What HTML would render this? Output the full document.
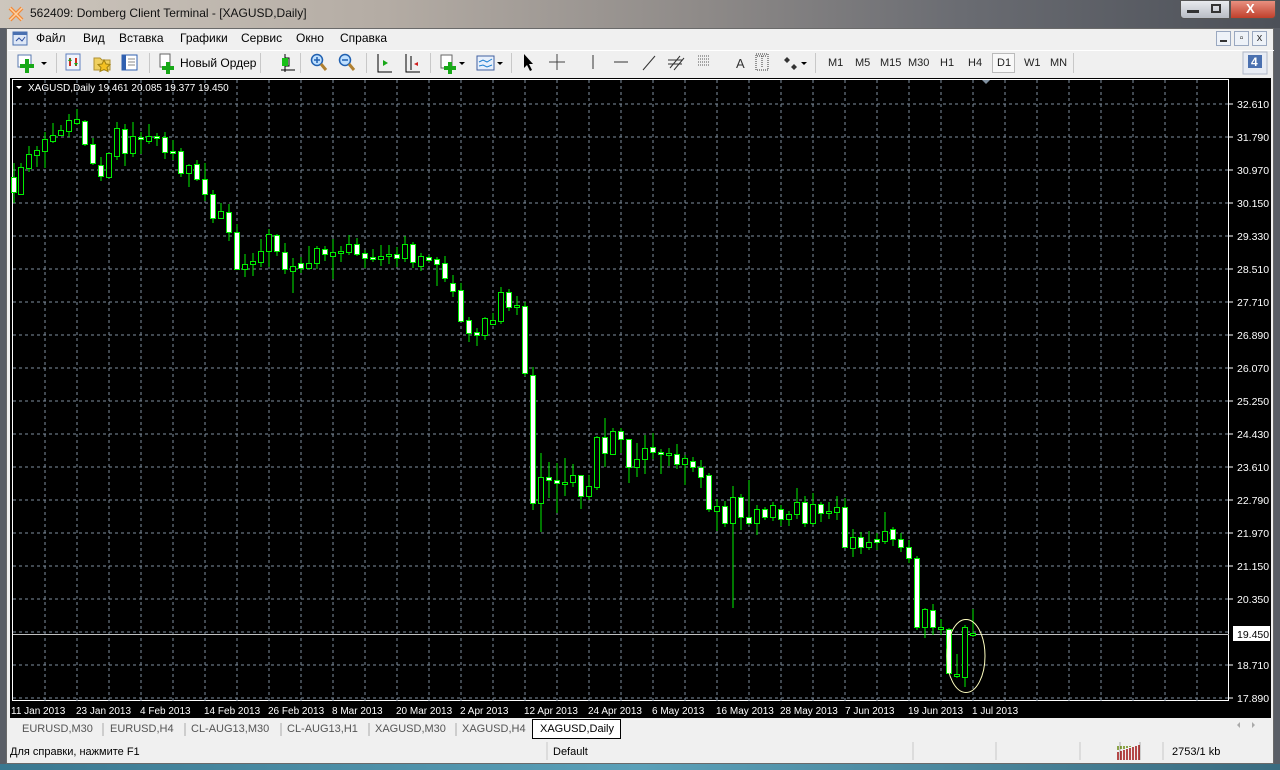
<!DOCTYPE html>
<html><head><meta charset="utf-8">
<style>
*{margin:0;padding:0;box-sizing:border-box}
body{width:1280px;height:770px;overflow:hidden;background:#5a5e66;font-family:"Liberation Sans","DejaVu Sans",sans-serif;position:relative}
.abs{position:absolute}
#title{left:0;top:0;width:1280px;height:28px;background:linear-gradient(90deg,#cdc6bd 0%,#b4aca4 30%,#8e8a88 55%,#6a6c72 75%,#4c5058 100%)}
#title span{position:absolute;left:30px;top:6px;font-size:12px;color:#111}
#frame{left:6px;top:28px;width:1268px;height:736px;background:#f0f0f0;border:1px solid #6a6a6a}
.menu{font-size:12px;color:#000;top:31px}
.tb{font-size:11px;color:#222;top:57px}
.sep{width:1px;height:20px;background:#c8c8c8;top:53px}
#chart{left:10px;top:78px;width:1261px;height:640px;background:#000}
.tab{top:723px;font-size:11px;color:#555}
.st{top:746px;font-size:11px;color:#000}
</style></head><body>
<div id="title" class="abs">
 <svg class="abs" style="left:8px;top:6px" width="16" height="16"><path d="M2 2L14 14M14 2L2 14" stroke="#f08a3a" stroke-width="4"/><path d="M2 2L14 14M14 2L2 14" stroke="#ffd0a0" stroke-width="1.5"/></svg>
 <span>562409: Domberg Client Terminal - [XAGUSD,Daily]</span>
 <div class="abs" style="left:1180px;top:0;width:50px;height:19px;background:linear-gradient(#e8eaee,#b8bcc4);border:1px solid #555;border-radius:0 0 0 4px"></div>
 <div class="abs" style="left:1187px;top:10px;width:12px;height:3px;background:#333"></div>
 <div class="abs" style="left:1211px;top:4px;width:10px;height:9px;border:2px solid #333"></div>
 <div class="abs" style="left:1230px;top:0;width:46px;height:19px;background:linear-gradient(#e89080,#c0402c);border:1px solid #555;border-radius:0 0 4px 0"></div>
 <div class="abs" style="left:1246px;top:1px;color:#fff;font-size:13px;font-weight:bold">X</div>
</div>
<div id="frame" class="abs"></div>
<!-- menu -->
<svg class="abs" style="left:12px;top:30px" width="18" height="18"><rect x="1" y="2" width="14" height="13" fill="#dfe8f6" stroke="#4a70b0"/><rect x="1" y="2" width="14" height="3" fill="#4a70b0"/><path d="M4 11l3-3 3 3 3-4" stroke="#3050a0" fill="none"/></svg>
<div class="abs menu" style="left:36px">Файл</div>
<div class="abs menu" style="left:83px">Вид</div>
<div class="abs menu" style="left:119px">Вставка</div>
<div class="abs menu" style="left:180px">Графики</div>
<div class="abs menu" style="left:241px">Сервис</div>
<div class="abs menu" style="left:296px">Окно</div>
<div class="abs menu" style="left:340px">Справка</div>
<div class="abs" style="left:1216px;top:31px;width:15px;height:15px;border:1px solid #9aa8c0;background:#eef2f8"></div>
<div class="abs" style="left:1220px;top:40px;width:7px;height:2px;background:#333"></div>
<div class="abs" style="left:1234px;top:31px;width:15px;height:15px;border:1px solid #9aa8c0;background:#eef2f8;font-size:10px;text-align:center;line-height:13px">▫</div>
<div class="abs" style="left:1252px;top:31px;width:15px;height:15px;border:1px solid #9aa8c0;background:#eef2f8;font-size:11px;text-align:center;line-height:13px;color:#333">x</div>
<!-- toolbar -->
<div class="abs" style="left:8px;top:50px;width:1266px;height:1px;background:#fff"></div>
<svg class="abs" style="left:0;top:50px" width="1280" height="28">
 <g fill="none">
 <rect x="18" y="5" width="13" height="12" fill="#fff" stroke="#5a7ab0"/><path d="M27 9v14M20 16h14" stroke="#18a818" stroke-width="4"/><path d="M41 12l3 3 3-3z" fill="#000"/>
 <rect x="66" y="4" width="14" height="16" fill="#f0f4fc" stroke="#6080c0"/><path d="M70 8v8M76 16v-8" stroke="#d03020" stroke-width="2"/><path d="M70 8l-2 3h4z M76 16l-2-3h4z" fill="#20a020"/>
 <path d="M94 8h6l2 2h8v10h-16z" fill="#f0d060" stroke="#b09030"/><path d="M104 10l2 4 4 .5-3 3 1 4-4-2-4 2 1-4-3-3 4-.5z" fill="#f4c020" stroke="#a08010"/>
 <rect x="122" y="5" width="15" height="15" fill="#fff" stroke="#3060b0"/><path d="M122 5h4v15h-4z" fill="#3060b0"/><path d="M128 9h7M128 12h7M128 15h7" stroke="#888"/>
 <rect x="160" y="4" width="10" height="13" fill="#fff" stroke="#666"/><path d="M168 12v12M162 18h12" stroke="#18a818" stroke-width="4"/>
 <path d="M285 4v18M281 20h14M285 8h4v8h-4" stroke="#000"/><rect x="282" y="8" width="6" height="8" fill="#18c018"/>
 <circle cx="317" cy="10" r="5.5" fill="#bfe0ff" stroke="#2060b0" stroke-width="1.5"/><path d="M321 14l5 6" stroke="#b08030" stroke-width="3"/><path d="M314 10h6M317 7v6" stroke="#2060b0" stroke-width="1.5"/>
 <circle cx="345" cy="10" r="5.5" fill="#bfe0ff" stroke="#2060b0" stroke-width="1.5"/><path d="M349 14l5 6" stroke="#b08030" stroke-width="3"/><path d="M342 10h6" stroke="#2060b0" stroke-width="1.5"/>
 <path d="M378 4v18h14" stroke="#000"/><path d="M383 10l5 3-5 3z" fill="#18a818"/>
 <path d="M406 4v18h14M411 6v14" stroke="#000"/><path d="M418 12l-4 2 4 2z" fill="#d02020"/>
 <rect x="441" y="5" width="11" height="13" fill="#fff" stroke="#666"/><path d="M450 12v12M444 18h12" stroke="#18a818" stroke-width="4"/><path d="M459 12l3 3 3-3z" fill="#000"/>
 <rect x="477" y="6" width="17" height="14" fill="#e8f0fc" stroke="#4060a0"/><path d="M479 12l4-2 4 2 5-3M479 16l4-1 4 2 5-2" stroke="#2080d0"/><path d="M497 12l3 3 3-3z" fill="#000"/>
 <path d="M524 4v14l3-3 3 6 2-1-3-6h4z" fill="#000"/>
 <path d="M557 4v16M549 12h16" stroke="#444"/>
 <path d="M593 5v14" stroke="#333"/><path d="M614 12h14" stroke="#333"/><path d="M643 20l12-14" stroke="#333"/>
 <path d="M670 18l10-12M674 20l10-12M668 10h14M668 14h14" stroke="#333"/>
 <path d="M698 6h12M698 9h12M698 12h12M698 15h12" stroke="#555" stroke-dasharray="1 1"/>
 <path d="M757 6h10M762 6v12M756 4h12v16h-12z" stroke="#333" stroke-dasharray="1 1"/>
 <path d="M787 7l-3 3 3 3 3-3z M794 14l-3 3 3 3 3-3z" fill="#333"/><path d="M801 12l3 3 3-3z" fill="#000"/>
 <rect x="1243" y="2" width="24" height="22" fill="#e8ecf4" stroke="#b0b8c8"/><rect x="1248" y="5" width="14" height="13" fill="#4a70b0"/>
 </g>
 <text x="736" y="18" font-size="13" fill="#333" font-family="Liberation Sans">A</text>
 <text x="1251" y="16" font-size="12" fill="#fff" font-family="Liberation Sans" font-weight="bold">4</text>
</svg>
<div class="abs" style="left:992px;top:53px;width:23px;height:20px;border:1px solid #bbb;background:#f8f8f8"></div>
<div class="abs tb" style="left:180px;font-size:12px;color:#000;top:56px">Новый Ордер</div>
<div class="abs tb" style="left:828px">M1</div>
<div class="abs tb" style="left:855px">M5</div>
<div class="abs tb" style="left:880px">M15</div>
<div class="abs tb" style="left:908px">M30</div>
<div class="abs tb" style="left:940px">H1</div>
<div class="abs tb" style="left:968px">H4</div>
<div class="abs tb" style="left:997px">D1</div>
<div class="abs tb" style="left:1024px">W1</div>
<div class="abs tb" style="left:1050px">MN</div>
<div class="abs sep" style="left:56px"></div><div class="abs sep" style="left:149px"></div><div class="abs sep" style="left:260px"></div><div class="abs sep" style="left:300px"></div><div class="abs sep" style="left:366px"></div><div class="abs sep" style="left:430px"></div><div class="abs sep" style="left:511px"></div><div class="abs sep" style="left:815px"></div><div class="abs sep" style="left:1073px"></div>
<!-- chart -->
<div id="chart" class="abs"></div>
<svg class="abs" style="left:0;top:0" width="1280" height="770">
 <rect x="12.5" y="79.5" width="1216" height="621" fill="none" stroke="#fff"/>
 <g stroke="#8090a0" stroke-dasharray="3 3">
  <path d="M13 104H1229M13 137H1229M13 170H1229M13 203H1229M13 236H1229M13 269H1229M13 302H1229M13 335H1229M13 368H1229M13 401H1229M13 434H1229M13 467H1229M13 500H1229M13 533H1229M13 566H1229M13 599H1229M13 632H1229M13 665H1229M13 698H1229"/>
  <path d="M45 80V704M77 80V704M109 80V704M141 80V704M173 80V704M205 80V704M237 80V704M269 80V704M301 80V704M333 80V704M365 80V704M397 80V704M429 80V704M461 80V704M493 80V704M525 80V704M557 80V704M589 80V704M621 80V704M653 80V704M685 80V704M717 80V704M749 80V704M781 80V704M813 80V704M845 80V704M877 80V704M909 80V704M941 80V704M973 80V704M1005 80V704M1037 80V704M1069 80V704M1101 80V704M1133 80V704M1165 80V704M1197 80V704"/>
 </g>
 <path d="M1229 104h4M1229 137h4M1229 170h4M1229 203h4M1229 236h4M1229 269h4M1229 302h4M1229 335h4M1229 368h4M1229 401h4M1229 434h4M1229 467h4M1229 500h4M1229 533h4M1229 566h4M1229 599h4M1229 665h4M1229 698h4" stroke="#fff"/>
 <path d="M13 634.5H1229" stroke="#c0c0c0"/>
 <path d="M982 80l4 4 4-4z" fill="#8090a0"/>
 <path d="M16 86l3 3 3-3z" fill="#fff"/>
 <g id="c" stroke="#00ee00" stroke-width="1" fill="#000"></g>
 <g stroke="#00ee00" stroke-width="1">
<path d="M14 163V203M21 163V195M29 146V172M37 146V167M45 132V168M53 123V143M61 125V136M69 114V137M77 109V125M85 120V146M93 138V165M101 157V181M109 153V177M117 122V160M125 124V166M133 122V157M141 132V154M149 124V144M157 133V146M165 132V159M173 140V160M181 148V177M189 164V187M197 160V181M205 163V201M213 190V223M221 203V218M229 204V241M237 224V269M245 254V277M253 253V276M261 239V267M269 229V267M277 234V256M285 243V274M293 258V293M301 257V273M309 246V268M317 246V269M325 246V261M333 239V279M341 246V262M349 235V255M357 238V256M365 250V268M373 249V262M381 245V266M389 245V264M397 247V267M405 236V262M413 242V268M421 253V271M429 255V262M437 257V286M445 256V282M453 275V297M461 283V321M469 317V342M477 328V346M485 317V340M493 313V324M501 287V324M509 289V311M517 296V315M525 302V376M533 367V510M541 453V532M549 462V498M557 463V513M565 458V496M573 464V487M581 475V509M589 475V500M597 436V490M605 418V467M613 428V454M621 428V453M629 439V483M637 443V477M645 435V474M653 433V459M661 449V474M669 448V466M677 444V469M685 455V485M693 457V472M701 460V488M709 473V512M717 499V531M725 501V527M733 486V608M741 494V530M749 480V525M757 505V535M765 507V520M773 502V521M781 505V526M789 511V526M797 488V519M805 496V527M813 493V525M821 502V522M829 502V519M837 496V520M845 498V547M853 529V557M861 532V554M869 531V550M877 533V550M885 512V544M893 527V546M901 533V552M909 540V563M917 556V630M925 608V638M933 604V635M941 619V635M949 628V673M957 654V678M965 625V687M973 609V637"/>
 </g>
 <g stroke="#00ee00" stroke-width="1" fill="#fff">
<rect x="11.5" y="177.5" width="5" height="15"/><rect x="82.5" y="121.5" width="5" height="23"/><rect x="90.5" y="144.5" width="5" height="19"/><rect x="98.5" y="165.5" width="5" height="11"/><rect x="122.5" y="129.5" width="5" height="24"/><rect x="138.5" y="137.5" width="5" height="2"/><rect x="154.5" y="136.5" width="5" height="2"/><rect x="162.5" y="137.5" width="5" height="15"/><rect x="170.5" y="151.5" width="5" height="2"/><rect x="178.5" y="151.5" width="5" height="22"/><rect x="194.5" y="164.5" width="5" height="15"/><rect x="202.5" y="179.5" width="5" height="15"/><rect x="210.5" y="194.5" width="5" height="24"/><rect x="226.5" y="212.5" width="5" height="20"/><rect x="234.5" y="232.5" width="5" height="37"/><rect x="274.5" y="235.5" width="5" height="16"/><rect x="282.5" y="252.5" width="5" height="17"/><rect x="298.5" y="263.5" width="5" height="5"/><rect x="322.5" y="249.5" width="5" height="5"/><rect x="354.5" y="244.5" width="5" height="10"/><rect x="362.5" y="253.5" width="5" height="5"/><rect x="370.5" y="257.5" width="5" height="2"/><rect x="394.5" y="254.5" width="5" height="4"/><rect x="410.5" y="244.5" width="5" height="18"/><rect x="426.5" y="257.5" width="5" height="3"/><rect x="434.5" y="259.5" width="5" height="5"/><rect x="442.5" y="263.5" width="5" height="15"/><rect x="450.5" y="283.5" width="5" height="8"/><rect x="458.5" y="290.5" width="5" height="31"/><rect x="466.5" y="320.5" width="5" height="13"/><rect x="474.5" y="332.5" width="5" height="3"/><rect x="506.5" y="292.5" width="5" height="15"/><rect x="522.5" y="306.5" width="5" height="67"/><rect x="530.5" y="375.5" width="5" height="128"/><rect x="546.5" y="477.5" width="5" height="3"/><rect x="554.5" y="480.5" width="5" height="3"/><rect x="578.5" y="475.5" width="5" height="21"/><rect x="602.5" y="437.5" width="5" height="16"/><rect x="618.5" y="431.5" width="5" height="8"/><rect x="626.5" y="439.5" width="5" height="28"/><rect x="650.5" y="447.5" width="5" height="5"/><rect x="658.5" y="452.5" width="5" height="2"/><rect x="674.5" y="454.5" width="5" height="10"/><rect x="690.5" y="461.5" width="5" height="6"/><rect x="698.5" y="467.5" width="5" height="10"/><rect x="706.5" y="475.5" width="5" height="34"/><rect x="722.5" y="506.5" width="5" height="17"/><rect x="738.5" y="497.5" width="5" height="20"/><rect x="746.5" y="517.5" width="5" height="6"/><rect x="762.5" y="509.5" width="5" height="8"/><rect x="778.5" y="509.5" width="5" height="10"/><rect x="802.5" y="502.5" width="5" height="21"/><rect x="818.5" y="504.5" width="5" height="9"/><rect x="842.5" y="507.5" width="5" height="40"/><rect x="858.5" y="537.5" width="5" height="10"/><rect x="874.5" y="539.5" width="5" height="3"/><rect x="890.5" y="529.5" width="5" height="10"/><rect x="898.5" y="539.5" width="5" height="8"/><rect x="906.5" y="547.5" width="5" height="11"/><rect x="914.5" y="558.5" width="5" height="69"/><rect x="930.5" y="610.5" width="5" height="17"/><rect x="946.5" y="629.5" width="5" height="44"/>
 </g>
 <g stroke="#00ee00" stroke-width="1" fill="#000">
<rect x="18.5" y="167.5" width="5" height="27"/><rect x="26.5" y="154.5" width="5" height="14"/><rect x="34.5" y="150.5" width="5" height="5"/><rect x="42.5" y="139.5" width="5" height="12"/><rect x="50.5" y="135.5" width="5" height="6"/><rect x="58.5" y="130.5" width="5" height="5"/><rect x="66.5" y="120.5" width="5" height="11"/><rect x="74.5" y="119.5" width="5" height="4"/><rect x="106.5" y="153.5" width="5" height="24"/><rect x="114.5" y="128.5" width="5" height="28"/><rect x="130.5" y="136.5" width="5" height="17"/><rect x="146.5" y="136.5" width="5" height="5"/><rect x="186.5" y="165.5" width="5" height="8"/><rect x="218.5" y="211.5" width="5" height="7"/><rect x="242.5" y="264.5" width="5" height="5"/><rect x="250.5" y="261.5" width="5" height="3"/><rect x="258.5" y="251.5" width="5" height="11"/><rect x="266.5" y="234.5" width="5" height="17"/><rect x="290.5" y="266.5" width="5" height="5"/><rect x="306.5" y="263.5" width="5" height="5"/><rect x="314.5" y="248.5" width="5" height="15"/><rect x="330.5" y="252.5" width="5" height="4"/><rect x="338.5" y="251.5" width="5" height="2"/><rect x="346.5" y="244.5" width="5" height="8"/><rect x="378.5" y="256.5" width="5" height="3"/><rect x="386.5" y="254.5" width="5" height="2"/><rect x="402.5" y="244.5" width="5" height="14"/><rect x="418.5" y="256.5" width="5" height="10"/><rect x="482.5" y="318.5" width="5" height="17"/><rect x="490.5" y="320.5" width="5" height="4"/><rect x="498.5" y="292.5" width="5" height="29"/><rect x="514.5" y="305.5" width="5" height="2"/><rect x="538.5" y="477.5" width="5" height="26"/><rect x="562.5" y="482.5" width="5" height="2"/><rect x="570.5" y="475.5" width="5" height="7"/><rect x="586.5" y="486.5" width="5" height="10"/><rect x="594.5" y="437.5" width="5" height="50"/><rect x="610.5" y="431.5" width="5" height="23"/><rect x="634.5" y="459.5" width="5" height="8"/><rect x="642.5" y="448.5" width="5" height="11"/><rect x="666.5" y="453.5" width="5" height="2"/><rect x="682.5" y="458.5" width="5" height="6"/><rect x="714.5" y="506.5" width="5" height="5"/><rect x="730.5" y="497.5" width="5" height="26"/><rect x="754.5" y="509.5" width="5" height="14"/><rect x="770.5" y="505.5" width="5" height="12"/><rect x="786.5" y="514.5" width="5" height="5"/><rect x="794.5" y="502.5" width="5" height="12"/><rect x="810.5" y="504.5" width="5" height="19"/><rect x="826.5" y="511.5" width="5" height="2"/><rect x="834.5" y="507.5" width="5" height="5"/><rect x="850.5" y="537.5" width="5" height="11"/><rect x="866.5" y="542.5" width="5" height="5"/><rect x="882.5" y="531.5" width="5" height="10"/><rect x="922.5" y="609.5" width="5" height="18"/><rect x="938.5" y="627.5" width="5" height="2"/><rect x="954.5" y="674.5" width="5" height="2"/><rect x="962.5" y="627.5" width="5" height="50"/><rect x="970.5" y="633.5" width="5" height="2"/>
 </g>
 <ellipse cx="966" cy="656" rx="19" ry="36.5" fill="none" stroke="#ffffc0" stroke-width="1"/>
 <rect x="1233" y="626" width="37" height="15" fill="#fff"/>
 <g font-family="Liberation Sans" font-size="10.5" fill="#fff">
  <text x="28" y="91" font-size="10">XAGUSD,Daily  19.461 20.085 19.377 19.450</text>
  <text x="1237" y="108">32.610</text><text x="1237" y="141">31.790</text><text x="1237" y="174">30.970</text><text x="1237" y="207">30.150</text><text x="1237" y="240">29.330</text><text x="1237" y="273">28.510</text><text x="1237" y="306">27.710</text><text x="1237" y="339">26.890</text><text x="1237" y="372">26.070</text><text x="1237" y="405">25.250</text><text x="1237" y="438">24.430</text><text x="1237" y="471">23.610</text><text x="1237" y="504">22.790</text><text x="1237" y="537">21.970</text><text x="1237" y="570">21.150</text><text x="1237" y="603">20.350</text><text x="1237" y="669">18.710</text><text x="1237" y="702">17.890</text>
  <text x="1237" y="638" fill="#000">19.450</text>
  <g font-size="10"><text x="11" y="714">11 Jan 2013</text><text x="76" y="714">23 Jan 2013</text><text x="140" y="714">4 Feb 2013</text><text x="204" y="714">14 Feb 2013</text><text x="268" y="714">26 Feb 2013</text><text x="332" y="714">8 Mar 2013</text><text x="396" y="714">20 Mar 2013</text><text x="460" y="714">2 Apr 2013</text><text x="524" y="714">12 Apr 2013</text><text x="588" y="714">24 Apr 2013</text><text x="652" y="714">6 May 2013</text><text x="716" y="714">16 May 2013</text><text x="780" y="714">28 May 2013</text><text x="845" y="714">7 Jun 2013</text><text x="908" y="714">19 Jun 2013</text><text x="972" y="714">1 Jul 2013</text></g>
 </g>
 <!-- tabs -->
 <path d="M103 723v13M185 723v13M281 723v13M369 723v13M456 723v13M1140 742v18M1120 742v18" stroke="#aaa"/>
 <rect x="532.5" y="719.5" width="88" height="19" fill="#fff" stroke="#000"/>
 <path d="M547 742v18M913 742v18M996 742v18M1080 742v18M1163 742v18" stroke="#c8c8c8"/>
 <g>
  <path d="M1118 752v8M1121 751v9M1124 750v10M1127 749v11M1130 748v12M1133 747v13M1136 746v14M1139 745v15" stroke="#a01010" stroke-width="1.5"/>
  <path d="M1118 746v4M1121 746v3M1124 746v3M1127 746v2M1130 746v1" stroke="#6a8a10" stroke-width="1.5"/>
 </g>
 <path d="M1240 722l-3 3 3 3zM1252 722l3 3-3 3z" fill="#aaa"/>
</svg>
<div class="abs tab" style="left:22px">EURUSD,M30</div>
<div class="abs tab" style="left:110px">EURUSD,H4</div>
<div class="abs tab" style="left:191px">CL-AUG13,M30</div>
<div class="abs tab" style="left:287px">CL-AUG13,H1</div>
<div class="abs tab" style="left:375px">XAGUSD,M30</div>
<div class="abs tab" style="left:462px">XAGUSD,H4</div>
<div class="abs tab" style="left:540px;color:#000">XAGUSD,Daily</div>
<div class="abs st" style="left:10px">Для справки, нажмите F1</div>
<div class="abs st" style="left:553px">Default</div>
<div class="abs st" style="left:1172px">2753/1 kb</div>
<div class="abs" style="left:0;top:764px;width:1280px;height:6px;background:linear-gradient(90deg,#3a7890,#5aa0b8,#3a6c80)"></div>
</body></html>
